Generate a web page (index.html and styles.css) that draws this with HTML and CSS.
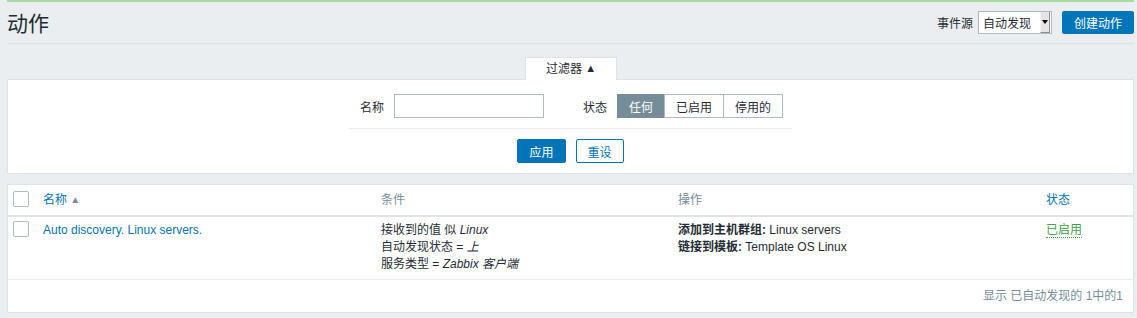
FILE: index.html
```html
<!DOCTYPE html>
<html lang="zh-CN">
<head>
<meta charset="UTF-8" />
<title>动作</title>
<link rel="stylesheet" href="styles.css">
</head>
<body>
<div class="wrapper">

  <!-- Page header -->
  <header class="page-header">
    <h1>动作</h1>
    <div class="header-controls">
      <label class="ctl-label">事件源</label>
      <div class="select">
        <span>自动发现</span>
        <span class="select-arrow"><i></i></span>
      </div>
      <button class="btn btn-primary btn-create">创建动作</button>
    </div>
  </header>

  <!-- Filter -->
  <div class="filter-tabs">
    <div class="filter-tab">过滤器 <span class="tri">&#9650;</span></div>
  </div>
  <div class="filter">
    <div class="filter-row">
      <label class="ctl-label">名称</label>
      <input class="text-input" type="text" />
      <label class="ctl-label status-label">状态</label>
      <div class="segmented">
        <span class="seg active">任何</span>
        <span class="seg">已启用</span>
        <span class="seg">停用的</span>
      </div>
    </div>
    <div class="filter-buttons">
      <button class="btn btn-primary">应用</button>
      <button class="btn btn-alt">重设</button>
    </div>
  </div>

  <!-- Actions list -->
  <div class="list">
    <table>
      <thead>
        <tr>
          <th class="col-check"><span class="checkbox"></span></th>
          <th class="col-name"><a class="sort">名称</a> <span class="sort-arrow">&#9650;</span></th>
          <th class="col-cond">条件</th>
          <th class="col-ops">操作</th>
          <th class="col-status"><a class="sort">状态</a></th>
        </tr>
      </thead>
      <tbody>
        <tr>
          <td class="col-check"><span class="checkbox"></span></td>
          <td class="col-name"><a class="link">Auto discovery. Linux servers.</a></td>
          <td class="col-cond">
            接收到的值 似 <em>Linux</em><br />
            自动发现状态 = <em>上</em><br />
            服务类型 = <em>Zabbix 客户端</em>
          </td>
          <td class="col-ops">
            <b>添加到主机群组:</b> Linux servers<br />
            <b>链接到模板:</b> Template OS Linux
          </td>
          <td class="col-status"><a class="status-on">已启用</a></td>
        </tr>
      </tbody>
    </table>
    <div class="list-footer">显示 已自动发现的 1中的1</div>
  </div>

</div>
</body>
</html>
```

FILE: styles.css
```css
/* Reset and basics */
* {margin:0; padding:0; box-sizing:border-box;}
html, body {
  background: #ebeef0;
  color: #1f2c33;
  font-family: "Liberation Sans", Arial, "Noto Sans CJK SC", sans-serif;
  font-size: 12px;
}
.wrapper {
  margin: 0 3px 0 7px;
  border-top: 2px solid #a5dca0;
}
a {color: #0275b8; text-decoration: none; cursor: pointer;}
button {font-family: inherit;}

/* Page header */
.page-header {
  display: flex;
  align-items: center;
  height: 42px;
  border-bottom: 1px solid #dde3e6;
}
.page-header h1 {
  font-size: 21px;
  font-weight: normal;
  color: #1f2c33;
  margin-top: -1px;
}
.header-controls {
  margin-left: auto;
  display: flex;
  align-items: center;
  margin-top: -1px;
}
.ctl-label {
  color: #1f2c33;
  margin-right: 5px;
}
.select {
  display: flex;
  align-items: center;
  width: 74px;
  height: 23px;
  background: #fff;
  border: 1px solid #acbbc2;
  padding-left: 2px;
  margin-right: 10px;
}
.select span:first-child {flex: 1; color: #1f2c33; padding-left: 2px;}
.select-arrow {
  width: 10px;
  height: 21px;
  margin-right: 1px;
  background: #e4e4e4;
  border-left: 1px solid #f4f4f4;
  border-right: 1px solid #8d8d8d;
  border-bottom: 1px solid #8d8d8d;
  display: flex;
  align-items: center;
  justify-content: center;
}
.select-arrow i {
  width: 0; height: 0;
  border-left: 3px solid transparent;
  border-right: 3px solid transparent;
  border-top: 4px solid #000;
}

/* Buttons */
.btn {
  height: 24px;
  padding: 0 11px;
  font-size: 12px;
  border: 1px solid #0275b8;
  border-radius: 2px;
  cursor: pointer;
}
.btn-primary {background: #0275b8; color: #fff;}
.btn-alt {background: #fff; color: #0275b8;}
.btn-create {width: 72px; height: 23px;}

/* Filter */
.filter-tabs {
  display: flex;
  justify-content: center;
  margin-top: 12px;
}
.filter-tab {
  width: 92px;
  height: 23px;
  background: #fff;
  border: 1px solid #dde3e6;
  border-bottom: none;
  text-align: center;
  line-height: 23px;
  margin-left: 1px;
  position: relative;
  top: 1px;
}
.filter-tab .tri {font-size: 11px; position: relative; top: -1px;}
.filter {
  background: #fff;
  border: 1px solid #dde3e6;
  height: 95px;
  padding-top: 14px;
}
.filter-row {
  width: 443px;
  margin: 0 auto;
  display: flex;
  align-items: center;
  justify-content: center;
  padding: 0 8px 10px 10px;
  border-bottom: 1px solid #ebeef0;
}
.filter-row .ctl-label {margin-right: 10px;}
.text-input {
  width: 150px;
  height: 24px;
  border: 1px solid #acbbc2;
  background: #fff;
}
.status-label {margin-left: 39px;}
.segmented {
  display: flex;
  height: 24px;
}
.seg {
  display: flex;
  align-items: center;
  padding: 0 11px;
  border: 1px solid #acbbc2;
  margin-left: -1px;
  color: #1f2c33;
}
.seg:first-child {margin-left: 0;}
.seg.active {background: #768d99; border-color: #768d99; color: #fff;}
.filter-buttons {
  display: flex;
  justify-content: center;
  gap: 10px;
  margin-top: 10px;
}

/* Actions list */
.list {
  margin-top: 10px;
  background: #fff;
  border: 1px solid #dde3e6;
}
.list table {
  width: 100%;
  border-collapse: collapse;
}
.list th {
  height: 31px;
  text-align: left;
  font-weight: normal;
  color: #768d99;
  border-bottom: 2px solid #dde3e6;
  padding: 0 5px 3px;
  vertical-align: middle;
}
.list td {
  height: 63px;
  vertical-align: top;
  padding: 5px 5px 0;
  line-height: 17px;
  border-bottom: 1px solid #ebeef0;
}
.col-check {width: 30px; padding-left: 5px !important;}
.list td.col-check {padding-top: 4px;}
.list th.col-check {padding-top: 1px;}
.col-name {width: 338px;}
.col-cond {width: 297px;}
.col-ops {width: 368px;}
.checkbox {
  display: block;
  width: 16px;
  height: 16px;
  border: 1px solid #acbbc2;
  border-radius: 2px;
  background: #fff;
}
.sort-arrow {font-size: 10px; color: #768d99; position: relative; top: -1px;}
.list em {font-style: italic;}
.list b {font-weight: bold;}
.status-on {
  color: #429e47;
  border-bottom: 1px dotted #429e47;
}
.list-footer {
  text-align: right;
  color: #768d99;
  padding: 0 10px 0 0;
  height: 32px;
  line-height: 33px;
}
```
